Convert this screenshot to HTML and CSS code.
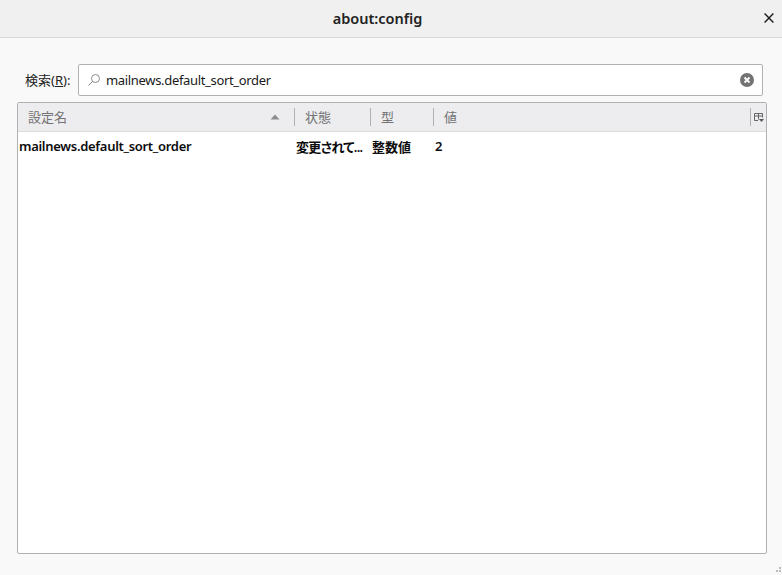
FILE: index.html
```html
<!DOCTYPE html>
<html lang="ja">
<head>
<meta charset="utf-8">
<title>about:config</title>
<link rel="stylesheet" href="styles.css">
</head>
<body>
<header class="titlebar">
  <div class="title">about:config</div>
  <button class="close" aria-label="閉じる">
    <svg width="10" height="10" viewBox="0 0 10 10"><path d="M0.6 0.6 L9.4 9.4 M9.4 0.6 L0.6 9.4" stroke="#1a1a1a" stroke-width="1.4" fill="none"/></svg>
  </button>
</header>
<main class="content">
  <div class="search-row">
    <label class="search-label">検索(<u>R</u>):</label>
    <div class="search-box">
      <svg class="glass" width="14" height="14" viewBox="0 0 14 14"><circle cx="8.5" cy="5.5" r="4" stroke="#8a8a8a" stroke-width="1" fill="none"/><path d="M5.6 8.4 L1.5 12.5" stroke="#8a8a8a" stroke-width="1" fill="none"/></svg>
      <span class="search-text">mailnews.default_sort_order</span>
      <svg class="clear" width="14" height="14" viewBox="0 0 14 14"><circle cx="7" cy="7" r="7" fill="#737373"/><path d="M4.5 4.5 L9.5 9.5 M9.5 4.5 L4.5 9.5" stroke="#fff" stroke-width="1.8" fill="none"/></svg>
    </div>
  </div>
  <section class="tree">
    <div class="tree-head">
      <div class="col col-name"><span>設定名</span><svg class="sort" width="10" height="6" viewBox="0 0 10 6"><path d="M5 0.5 L9.5 5.5 L0.5 5.5 Z" fill="#8c8c8c"/></svg></div>
      <div class="col col-status sep"><span>状態</span></div>
      <div class="col col-type sep"><span>型</span></div>
      <div class="col col-value sep"><span>値</span></div>
      <div class="col col-pick sep">
        <svg class="picker" width="10" height="10" viewBox="0 0 10 10"><path d="M0.5 7.5 V0.5 H8.5 V4.5 M0.5 3 H8.5 M4.5 0.5 V6.5 M0.5 7.5 H4" stroke="#666" stroke-width="1" fill="none"/><path d="M5 6 H10 L7.5 9 Z" fill="#555"/></svg>
      </div>
    </div>
    <div class="tree-row">
      <div class="cell cell-name">mailnews.default_sort_order</div>
      <div class="cell cell-status">変更されて...</div>
      <div class="cell cell-type">整数値</div>
      <div class="cell cell-value">2</div>
    </div>
  </section>
</main>
<svg class="resizer" width="8" height="8" viewBox="0 0 8 8"><path d="M5 0h2v2H5z M2 3h2v2H2z M5 3h2v2H5z" fill="#bbb"/></svg>
</body>
</html>
```
FILE: styles.css
```css
* { box-sizing: border-box; }
html, body { height: 100%; }
body {
  margin: 0;
  height: 575px;
  overflow: hidden;
  position: relative;
  display: flex;
  flex-direction: column;
  background: #f9f9f9;
  color: #0c0c0d;
  font: 13px "Noto Sans", "Noto Sans CJK JP", sans-serif;
}
.titlebar {
  height: 38px;
  flex: none;
  display: flex;
  align-items: center;
  justify-content: center;
  padding-right: 27px;
  padding-bottom: 2px;
  background: #f0f0f0;
  border-bottom: 1px solid #d8d8d8;
  position: relative;
}
.title { font-size: 14.5px; font-weight: 600; color: #222; }
.close {
  position: absolute;
  right: 8px;
  top: 13px;
  width: 10px;
  height: 10px;
  padding: 0;
  border: 0;
  background: none;
  display: flex;
}
.content {
  flex: 1;
  display: flex;
  flex-direction: column;
  padding: 26px 15px 21px 17px;
  min-height: 0;
}
.search-row {
  display: flex;
  align-items: center;
  height: 32px;
  margin-bottom: 6px;
  flex: none;
}
.search-label { width: 61px; padding-left: 8px; padding-bottom: 2px; flex: none; color: #222; white-space: nowrap; }
.search-box {
  flex: 1;
  height: 32px;
  margin-right: 4px;
  background: #fff;
  border: 1px solid #b1b1b3;
  border-radius: 2px;
  display: flex;
  align-items: center;
  padding: 0 8px 0 8px;
}
.glass { flex: none; margin-right: 5px; }
.search-text { flex: 1; font-size: 13px; letter-spacing: -0.33px; color: #1a1a1a; }
.clear { flex: none; }
.tree {
  flex: 1;
  display: flex;
  flex-direction: column;
  background: #fff;
  border: 1px solid #b1b1b3;
  border-radius: 2px;
  min-height: 0;
}
.tree-head {
  display: flex;
  height: 29px;
  flex: none;
  background: #ededf0;
  border-bottom: 1px solid #dcdcdc;
  color: #737373;
}
.col {
  display: flex;
  align-items: center;
  justify-content: space-between;
  padding-left: 11px;
  padding-bottom: 1px;
  position: relative;
}
.sep::before {
  content: "";
  position: absolute;
  left: 0;
  top: 5px;
  bottom: 5px;
  width: 1px;
  background: #b1b1b3;
}
.col-name { width: 276px; padding-left: 10px; padding-right: 14px; }
.col-status { width: 76px; }
.col-type { width: 63px; }
.col-value { width: 317px; }
.col-pick { flex: 1; padding-left: 4px; padding-top: 1px; padding-bottom: 0; }
.picker { flex: none; }
.tree-row {
  display: flex;
  height: 28px;
  align-items: center;
  font-weight: 600;
  font-size: 13px;
  color: #0c0c0d;
}
.cell { white-space: nowrap; overflow: hidden; padding-left: 1px; }
.cell-name { width: 277px; letter-spacing: -0.3px; }
.cell-status { width: 76px; font-feature-settings: "palt"; letter-spacing: -0.7px; }
.cell-type { width: 63px; }
.cell-value { flex: 1; }
.resizer { position: absolute; right: 0; bottom: 0; }
```
